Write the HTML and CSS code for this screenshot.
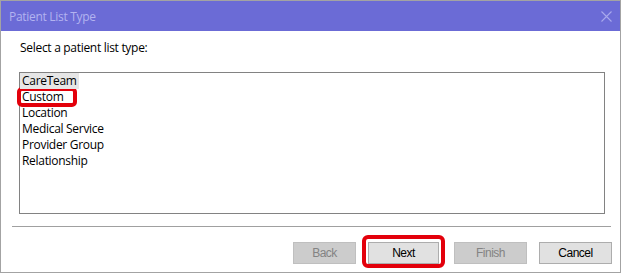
FILE: index.html
```html
<!DOCTYPE html>
<html>

<head>
    <title>Patient List Type</title>
    <link rel="stylesheet" href="styles.css">
</head>

<body>
    <div class="dialog">
        <div class="titlebar">
            <span class="title">Patient List Type</span>
            <svg class="close" width="11" height="11" viewBox="0 0 11 11">
                <path d="M0.5 0.5 L10.5 10.5 M10.5 0.5 L0.5 10.5" stroke="#a9a9ec" stroke-width="1.1" fill="none" />
            </svg>
        </div>

        <div class="content">
            <p class="prompt">Select a patient list type:</p>
            <ul class="listbox">
                <li><span class="item selected">CareTeam</span></li>
                <li class="marked"><span class="item">Custom</span></li>
                <li><span class="item">Location</span></li>
                <li><span class="item">Medical Service</span></li>
                <li><span class="item">Provider Group</span></li>
                <li><span class="item">Relationship</span></li>
            </ul>
        </div>

        <hr class="separator">

        <div class="buttons">
            <button class="btn btn-back" disabled>Back</button>
            <span class="marked-btn"><button class="btn btn-next">Next</button></span>
            <button class="btn btn-finish" disabled>Finish</button>
            <button class="btn btn-cancel">Cancel</button>
        </div>
    </div>
</body>

</html>
```

FILE: styles.css
```css
body {
    margin: 0;
    background: #ffffff;
}

.dialog {
    width: 619px;
    height: 271px;
    border: 1px solid #a3a3a3;
    background: #ffffff;
    display: flex;
    flex-direction: column;
}

.titlebar {
    height: 30px;
    flex: none;
    background: #6b6bd6;
    color: #b3b3f0;
    padding: 0 8px;
    display: flex;
    align-items: center;
    justify-content: space-between;
    font-family: "Open Sans", sans-serif;
    font-size: 12px;
    letter-spacing: -0.3px;
}

.close {
    display: block;
}

.content {
    padding: 9px 15px 0 18px;
    font-family: "Open Sans", sans-serif;
    font-size: 12px;
    letter-spacing: -0.3px;
    color: #000000;
}

.prompt {
    margin: 0 0 16px 1px;
    line-height: 16px;
}

.listbox {
    width: 584px;
    height: 140px;
    margin: 0;
    padding: 0;
    list-style: none;
    border: 1px solid #828282;
}

.listbox li {
    height: 16px;
    line-height: 16px;
    position: relative;
}

.item {
    display: inline-block;
    padding: 0 2px;
    position: relative;
    z-index: 1;
}

.selected {
    background: #e6e6e6;
}

/* red annotation round the Custom row */
.marked::after {
    content: "";
    position: absolute;
    left: -3px;
    top: -2px;
    width: 60px;
    height: 20px;
    box-sizing: border-box;
    border: 4px solid #e3000b;
    border-radius: 5px;
}

.separator {
    margin: 12px 9px 0 11px;
    border: none;
    height: 1px;
    background: #a0a0a0;
}

.buttons {
    margin-top: 15px;
    padding-right: 8px;
    display: flex;
    justify-content: flex-end;
    align-items: center;
}

.btn {
    height: 22px;
    padding: 0;
    box-sizing: border-box;
    background: #e1e1e1;
    border: 1px solid #adadad;
    color: #000000;
    font-family: "Liberation Sans", Arial, sans-serif;
    font-size: 12px;
    letter-spacing: -0.5px;
    display: block;
}

.btn:disabled {
    background: #cccccc;
    border-color: #bfbfbf;
    color: #838383;
}

.btn-back {
    width: 63px;
}

.marked-btn {
    position: relative;
    margin-left: 12px;
}

/* red annotation round the Next button */
.marked-btn::after {
    content: "";
    position: absolute;
    left: -6px;
    right: -6px;
    top: -7px;
    bottom: -4px;
    border: 4px solid #e3000b;
    border-radius: 6px;
}

.btn-next {
    width: 71px;
}

.btn-finish {
    width: 73px;
    margin-left: 15px;
}

.btn-cancel {
    width: 73px;
    margin-left: 12px;
}
```
